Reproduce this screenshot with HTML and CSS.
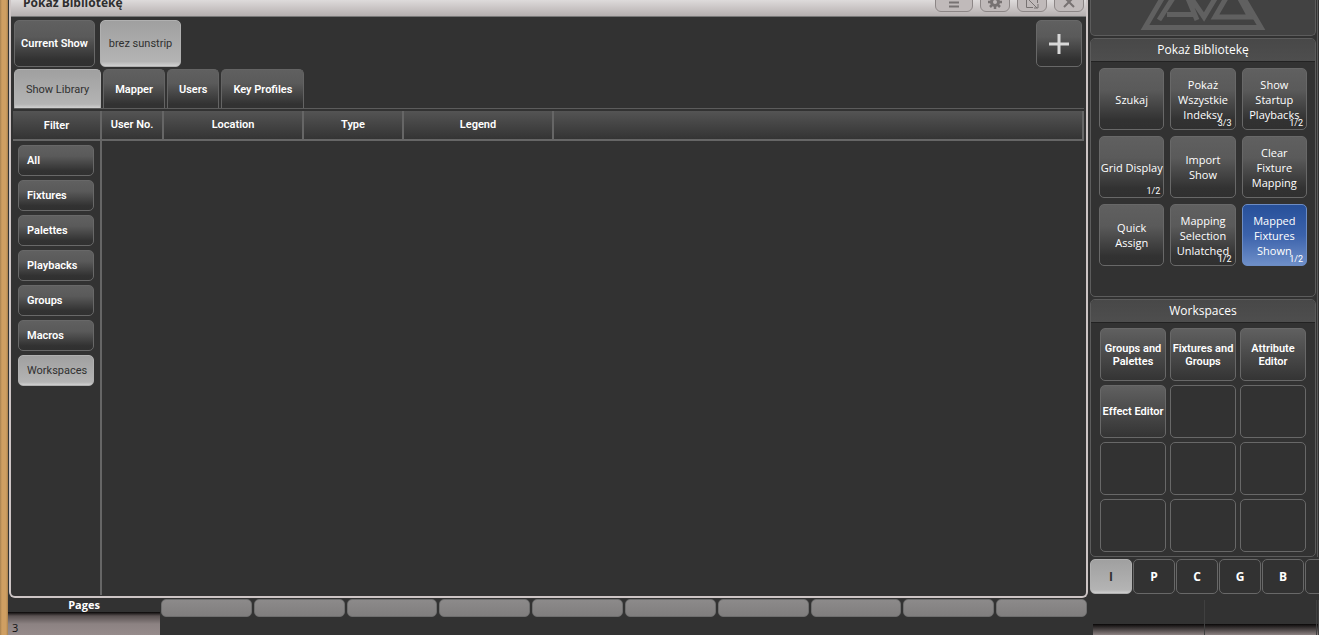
FILE: index.html
```html
<!DOCTYPE html>
<html lang="pl">
<head>
    <meta charset="UTF-8">
    <meta name="viewport" content="width=device-width, initial-scale=1.0">
    <title>Pokaż Bibliotekę</title>
    <link rel="stylesheet" href="styles.css">
</head>
<body>
    <div class="desk-edge"></div>

    <main class="desk">
        <section class="window">
            <header class="titlebar">
                <h1>Pokaż Bibliotekę</h1>
                <div class="window-buttons">
                    <button class="wide" aria-label="Menu">
                        <svg width="14" height="14" viewBox="0 0 14 14"><path d="M2 3.5h10M2 7.5h10M2 11.5h10"/></svg>
                    </button>
                    <button aria-label="Settings">
                        <svg width="14" height="14" viewBox="0 0 14 14"><circle cx="7" cy="7" r="3.5" stroke-width="3"/><path d="M7 0v3M7 11v3M0 7h3M11 7h3M2 2l2 2M10 10l2 2M12 2l-2 2M4 10l-2 2" stroke-width="2.5"/></svg>
                    </button>
                    <button aria-label="Resize">
                        <svg width="14" height="14" viewBox="0 0 14 14"><path d="M8 12.500H1.500V1h11v7M4 5l8 8M13 9v4H9" stroke-width="1"/></svg>
                    </button>
                    <button aria-label="Close">
                        <svg width="14" height="14" viewBox="0 0 14 14"><path d="M2 2l10 10M12 2L2 12"/></svg>
                    </button>
                </div>
            </header>

            <nav class="shows">
                <button class="btn">Current Show</button>
                <button class="btn selected">brez sunstrip</button>
                <button class="btn add" aria-label="Add">
                    <svg width="20" height="20" viewBox="0 0 20 20"><path d="M10 0v20M0 10h20"/></svg>
                </button>
            </nav>

            <nav class="tabs">
                <button class="tab selected">Show Library</button>
                <button class="tab">Mapper</button>
                <button class="tab">Users</button>
                <button class="tab">Key Profiles</button>
            </nav>

            <div class="library">
                <aside class="filter">
                    <h2>Filter</h2>
                    <div class="filter-list">
                        <button class="btn">All</button>
                        <button class="btn">Fixtures</button>
                        <button class="btn">Palettes</button>
                        <button class="btn">Playbacks</button>
                        <button class="btn">Groups</button>
                        <button class="btn">Macros</button>
                        <button class="btn selected">Workspaces</button>
                    </div>
                </aside>
                <div class="results">
                    <table>
                        <thead>
                            <tr>
                                <th class="col-user">User No.</th>
                                <th class="col-location">Location</th>
                                <th class="col-type">Type</th>
                                <th class="col-legend">Legend</th>
                                <th></th>
                            </tr>
                        </thead>
                    </table>
                </div>
            </div>
        </section>

        <footer class="pages">
            <div class="page-select">
                <span class="page-label">Pages</span>
                <div class="page-roller">3</div>
            </div>
            <div class="page-keys">
                <button aria-label="Page 1"></button>
                <button aria-label="Page 2"></button>
                <button aria-label="Page 3"></button>
                <button aria-label="Page 4"></button>
                <button aria-label="Page 5"></button>
                <button aria-label="Page 6"></button>
                <button aria-label="Page 7"></button>
                <button aria-label="Page 8"></button>
                <button aria-label="Page 9"></button>
                <button aria-label="Page 10"></button>
            </div>
        </footer>
    </main>

    <aside class="side">
        <div class="panels">
            <div class="panel logo">
                <svg width="126" height="60" viewBox="0 -30 126 60">
                    <path class="frame" d="M5 27.500L37 -27h52L121 27.500z"/>
                    <path class="mark" d="M19 20L42 -16L57 20M27 14.500h27M47 -8L64 17L79 -8M75 17L93 -14L110 17z"/>
                </svg>
            </div>

            <section class="panel menu">
                <h2>Pokaż Bibliotekę</h2>
                <div class="softkeys">
                    <button class="btn">Szukaj</button>
                    <button class="btn">Pokaż Wszystkie Indeksy<small>3/3</small></button>
                    <button class="btn">Show Startup Playbacks<small>1/2</small></button>
                    <button class="btn">Grid Display<small>1/2</small></button>
                    <button class="btn">Import Show</button>
                    <button class="btn">Clear Fixture Mapping</button>
                    <button class="btn">Quick Assign</button>
                    <button class="btn">Mapping Selection Unlatched<small>1/2</small></button>
                    <button class="btn active">Mapped Fixtures Shown<small>1/2</small></button>
                </div>
            </section>

            <section class="panel workspaces">
                <h2>Workspaces</h2>
                <div class="workspace-grid">
                    <button class="btn">Groups and Palettes</button>
                    <button class="btn">Fixtures and Groups</button>
                    <button class="btn">Attribute Editor</button>
                    <button class="btn">Effect Editor</button>
                    <button class="btn empty" aria-label="Empty"></button>
                    <button class="btn empty" aria-label="Empty"></button>
                    <button class="btn empty" aria-label="Empty"></button>
                    <button class="btn empty" aria-label="Empty"></button>
                    <button class="btn empty" aria-label="Empty"></button>
                    <button class="btn empty" aria-label="Empty"></button>
                    <button class="btn empty" aria-label="Empty"></button>
                    <button class="btn empty" aria-label="Empty"></button>
                </div>
            </section>
        </div>

        <nav class="attributes">
            <button class="btn selected">I</button>
            <button class="btn">P</button>
            <button class="btn">C</button>
            <button class="btn">G</button>
            <button class="btn">B</button>
            <button class="btn" aria-label="More"></button>
        </nav>

        <div class="wheels">
            <div class="wheel"></div>
            <div class="wheel"></div>
            <div class="wheel"></div>
        </div>
    </aside>
</body>
</html>
```
FILE: styles.css
```css
* {
    box-sizing: border-box;
}
body {
    display: flex;
    height: 100vh;
    margin: 0;
    overflow: hidden;
    background: #323232;
    color: #fff;
    font-family: "Open Sans", "Noto Sans", sans-serif;
    font-size: 11px;
    line-height: 15px;
}
h1, h2 {
    margin: 0;
}
button {
    font: inherit;
    color: inherit;
    padding: 0;
}
svg {
    fill: none;
    stroke: currentColor;
    stroke-width: 2;
}
.desk-edge {
    flex: none;
    width: 8px;
    background: linear-gradient(90deg, #a8814f, #cf9f62 2px, #cf9f62 6px, #a8814f);
}
.desk {
    flex: 1;
    min-width: 0;
    display: flex;
    flex-direction: column;
}

/* buttons */
.btn {
    border: 1px solid #686868;
    border-radius: 5px;
    background: linear-gradient(#606060, #5a5a5a 35%, #323232 85%, #303030);
}
.btn.selected, .tab.selected {
    background: linear-gradient(#a0a0a0, #b4b4b4 90%, #d0d0d0);
    border-color: #b0b0b0;
    color: #303030;
    font-weight: 400;
}
.btn.active {
    border-color: #6c8cc4;
    background: linear-gradient(#27509a, #3b62ab 50%, #6e8fc8);
}

/* main window */
.window {
    flex: 1;
    min-height: 0;
    display: flex;
    flex-direction: column;
    margin: -12px 0 0 1px;
    border: 2px solid #cdc5c5;
    border-top: 0;
    border-radius: 0 0 6px 6px;
    font-family: Roboto, "Open Sans", sans-serif;
    font-weight: 600;
}
.titlebar {
    flex: none;
    display: flex;
    align-items: center;
    justify-content: space-between;
    height: 29px;
    padding: 0 2px 0 12px;
    background: linear-gradient(#e0dddd 40%, #b5afaf);
    border-bottom: 1px solid #777;
    color: #2e2e2e;
}
.titlebar h1 {
    font-family: "Open Sans", sans-serif;
    font-size: 12px;
    font-weight: 700;
}
.window-buttons {
    display: flex;
    gap: 7px;
}
.window-buttons button {
    display: flex;
    align-items: center;
    justify-content: center;
    width: 30px;
    height: 20px;
    border: 1px solid #8c8686;
    border-radius: 6px;
    background: #c0baba;
    color: #777272;
}
.window-buttons .wide {
    width: 38px;
}
.shows {
    display: flex;
    gap: 5px;
    padding: 3px 4px 2px 3px;
}
.shows .btn {
    width: 81px;
    height: 47px;
}
.shows .add {
    width: 46px;
    margin-left: auto;
    color: #d8d8d8;
    line-height: 0;
}
.shows .add svg {
    stroke-width: 3;
}
.tabs {
    display: flex;
    gap: 2px;
    margin: 0 2px 0 3px;
    border-bottom: 1px solid #5c5c5c;
}
.tab {
    height: 39px;
    padding: 0 11px;
    border: 1px solid #646464;
    border-bottom: 0;
    border-radius: 5px 5px 0 0;
    background: linear-gradient(#606060, #5a5a5a 35%, #323232 90%);
}
.library {
    flex: 1;
    display: flex;
    padding: 2px 2px 1px;
}
.filter {
    flex: none;
    width: 89px;
    border-right: 2px solid #666;
}
.filter h2, th {
    height: 30px;
    border-bottom: 2px solid #666;
    background: linear-gradient(#545454, #343434);
    font-size: 11px;
    font-weight: 600;
    line-height: 30px;
    text-align: center;
}
.filter-list {
    display: flex;
    flex-direction: column;
    gap: 4px;
    padding: 4px 6px 4px 5px;
}
.filter-list .btn {
    height: 31px;
    padding-left: 8px;
    text-align: left;
}
.results {
    flex: 1;
}
table {
    width: 100%;
    table-layout: fixed;
    border-collapse: separate;
    border-spacing: 0;
}
th {
    padding: 0;
    border-right: 2px solid #666;
    line-height: 28px;
}
.col-user {
    width: 62px;
}
.col-location {
    width: 140px;
}
.col-type {
    width: 100px;
}
.col-legend {
    width: 150px;
}

/* page keys */
.pages {
    flex: none;
    display: flex;
    height: 37px;
}
.page-select {
    flex: none;
    display: flex;
    flex-direction: column;
    width: 152px;
    font-weight: 700;
    text-align: center;
}
.page-label {
    height: 15px;
    line-height: 14px;
}
.page-roller {
    flex: 1;
    padding: 9px 4px 0;
    background: linear-gradient(#080606, #5a5252 4px, #8c8282 12px, #968b8b);
    color: #111;
    font-weight: 400;
    line-height: 14px;
    text-align: left;
}
.page-keys {
    flex: 1;
    display: flex;
    gap: 2px;
    padding: 1px 1px 0;
}
.page-keys button {
    flex: 1;
    height: 18px;
    border: 1px solid #6e6e6e;
    border-radius: 5px;
    background: linear-gradient(#8c8a8a, #807e7e);
}

/* right column */
.side {
    flex: none;
    display: flex;
    flex-direction: column;
    width: 231px;
    padding-left: 2px;
}
.panels {
    flex: none;
    display: flex;
    flex-direction: column;
    gap: 2px;
    margin-right: 1px;
    padding-right: 1px;
    border-right: 1px solid #5a5a5a;
}
.panel {
    border: 1px solid #5c5c5c;
    border-radius: 5px;
}
.panel h2 {
    height: 23px;
    border-bottom: 1px solid #222;
    border-radius: 4px 4px 0 0;
    background: linear-gradient(#484848, #4e4e4e);
    font-size: 12px;
    font-weight: 400;
    line-height: 22px;
    text-align: center;
}
.logo {
    display: flex;
    align-items: flex-end;
    justify-content: center;
    height: 36px;
    padding-bottom: 5px;
    border-top: 0;
    border-radius: 0 0 5px 5px;
    background: #424242;
    color: #606060;
    overflow: hidden;
}
.logo svg {
    flex: none;
}
.logo .frame, .logo .mark {
    stroke-width: 5;
}
.menu {
    height: 259px;
}
.softkeys {
    display: grid;
    grid-template-columns: repeat(3, 1fr);
    grid-auto-rows: 62px;
    gap: 6px;
    padding: 6px 8px;
}
.softkeys .btn {
    position: relative;
}
.softkeys small {
    position: absolute;
    right: 3px;
    bottom: 1px;
    font-family: Roboto, sans-serif;
    font-size: 9px;
    line-height: 10px;
}
.workspaces {
    height: 258px;
}
.workspace-grid {
    display: grid;
    grid-template-columns: repeat(3, 1fr);
    grid-auto-rows: 53px;
    gap: 4px;
    padding: 5px 9px;
}
.workspace-grid .btn {
    background: linear-gradient(#606060, #343434);
    font-family: Roboto, "Open Sans", sans-serif;
    font-weight: 600;
    line-height: 13px;
}
.workspace-grid .empty, .attributes .btn {
    background: #323232;
}
.attributes {
    flex: none;
    display: flex;
    gap: 1px;
    padding-top: 2px;
    overflow: hidden;
}
.attributes .btn {
    flex: none;
    width: 42px;
    height: 35px;
    font-size: 12px;
    font-weight: 700;
}
.attributes .selected {
    background: linear-gradient(#a0a0a0, #b4b4b4 90%, #d0d0d0);
}
.wheels {
    flex: 1;
    display: grid;
    grid-template-columns: 112px 112px 1fr;
    margin: 6px 0 0 3px;
}
.wheel {
    border-right: 1px solid #404040;
    background: linear-gradient(#0a0808, #8c8282) bottom / 100% 11px no-repeat;
}
```
